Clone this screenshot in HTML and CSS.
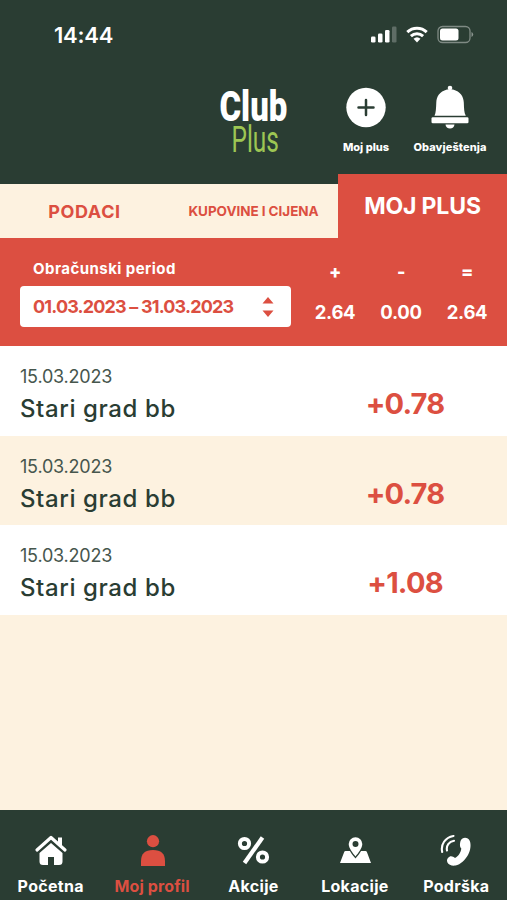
FILE: index.html
```html
<!DOCTYPE html>
<html lang="bs">
<head>
<meta charset="utf-8">
<meta name="viewport" content="width=device-width, initial-scale=1">
<title>Club Plus</title>
<link rel="stylesheet" href="styles.css">
</head>
<body>
<div class="app">
  <header class="top">
    <div class="status">
      <span class="time">14:44</span>
      <svg class="status-icons" width="104" height="20" viewBox="0 0 104 20" fill="#fff">
        <rect x="1" y="11.500" width="4.500" height="6" rx="1.300"/><rect x="8" y="8.500" width="4.500" height="9" rx="1.300"/><rect x="15" y="5" width="4.500" height="12.500" rx="1.300"/><rect x="22" y="1.500" width="4.500" height="16" rx="1.300" opacity=".25"/>
        <g fill="none" stroke="#fff" stroke-width="3"><path d="M37.300 7.200a14 14 0 0 1 19.400 0"/><path d="M40.900 11.200a9 9 0 0 1 12.200 0"/></g>
        <path d="M43.500 13.800a5.200 5.200 0 0 1 7 0L47 17.500z"/>
        <rect x="68" y="1.500" width="32" height="16" rx="4.500" fill="none" stroke="#fff" stroke-opacity=".4" stroke-width="1.300"/>
        <rect x="70" y="3.500" width="18.500" height="12" rx="2.500"/><path d="M101.500 7v5q1.700-.8 1.700-2.500t-1.700-2.500z" opacity=".45"/>
      </svg>
    </div>
    <div class="brand-row">
      <svg class="logo" width="70" height="90" viewBox="0 0 70 90">
        <text class="logo-club" transform="translate(.5 46) scale(.6 1)" x="0" y="0" textLength="113" lengthAdjust="spacingAndGlyphs">Club</text>
        <text class="logo-plus" transform="translate(12.500 77) scale(.6 1)" x="0" y="0" textLength="79" lengthAdjust="spacingAndGlyphs">Plus</text>
      </svg>
      <div class="action plus">
        <svg width="40" height="44" viewBox="0 0 40 44"><circle cx="20" cy="22.500" r="19.700" fill="#fff"/><path d="M20 15v15M12.500 22.500h15" stroke="#2a3d33" stroke-width="2.500" stroke-linecap="round"/></svg>
        <span>Moj plus</span>
      </div>
      <div class="action bell">
        <svg width="40" height="44" viewBox="0 0 40 44" fill="#fff"><circle cx="20" cy="3" r="2.300"/><path d="M17 4.500h6c7.500 2 10.500 7 10.800 13 .3 6 .2 10 2 13.300H4.500c1.500-3.300 1.500-7.300 1.800-13.300C6.500 11.500 9.500 6.500 17 4.500z"/><rect x="1.500" y="32.300" width="37" height="6" rx="1.300"/><path d="M15.500 39.500h9c-.3 2.500-2 4-4.500 4s-4.200-1.500-4.500-4z"/></svg>
        <span>Obavještenja</span>
      </div>
    </div>
  </header>
  <nav class="tabs">
    <a class="tab t1">PODACI</a>
    <a class="tab t2">KUPOVINE I CIJENA</a>
    <a class="tab t3">MOJ PLUS</a>
  </nav>
  <section class="summary">
    <div class="period">
      <label>Obračunski period</label>
      <div class="select"><span>01.03.2023 – 31.03.2023</span>
        <svg width="12" height="20" viewBox="0 0 12 20" fill="#dc4f41"><path d="M6 0l5.500 6.500H.5zM6 20l5.500-6.500H.5z"/></svg>
      </div>
    </div>
    <div class="totals">
      <div><b>+</b><span>2.64</span></div>
      <div><b>-</b><span>0.00</span></div>
      <div><b>=</b><span>2.64</span></div>
    </div>
  </section>
  <main class="list">
    <article class="row"><div class="info"><time>15.03.2023</time><h2>Stari grad bb</h2></div><strong>+0.78</strong></article>
    <article class="row"><div class="info"><time>15.03.2023</time><h2>Stari grad bb</h2></div><strong>+0.78</strong></article>
    <article class="row"><div class="info"><time>15.03.2023</time><h2>Stari grad bb</h2></div><strong>+1.08</strong></article>
  </main>
  <nav class="bottom">
    <a><svg width="34" height="32" viewBox="0 0 34 32" fill="#fff"><path d="M3 15L17 2.500l14 12.500" fill="none" stroke="#fff" stroke-width="3.200" stroke-linecap="round" stroke-linejoin="round"/><path d="M24 2.500h4v9l-4-3.500z"/><path d="M17 8L5.500 18v8.500q0 3.500 3.500 3.500h5v-8h6v8h5q3.500 0 3.500-3.500V18z"/></svg><span>Početna</span></a>
    <a class="on"><svg width="34" height="32" viewBox="0 0 34 32" fill="#dc4f41"><circle cx="18" cy="6.200" r="6.100"/><path d="M6 31V26q0-11 12-11t12 11v5z"/></svg><span>Moj profil</span></a>
    <a><svg width="34" height="32" viewBox="0 0 34 32" fill="none" stroke="#fff"><circle cx="8.500" cy="8.500" r="4.600" stroke-width="4"/><circle cx="26.500" cy="22" r="4.600" stroke-width="4"/><path d="M26.500 2.500L8.500 28" stroke-width="4.200"/></svg><span>Akcije</span></a>
    <a><svg width="34" height="32" viewBox="0 0 34 32" fill="#fff"><path d="M7.500 16h20q1 0 1.400 1L33 28H2l4.200-11q.3-1 1.300-1z"/><path d="M17.500 1a8 8 0 0 1 8 8c0 5-5 11-8 14.500-3-3.500-8-9.500-8-14.500a8 8 0 0 1 8-8z" fill="#2a3d33"/><path fill-rule="evenodd" d="M17.500 2.200a6.800 6.800 0 0 1 6.800 6.800c0 4-4 9-6.800 12.500-2.800-3.500-6.800-8.500-6.800-12.500a6.800 6.800 0 0 1 6.800-6.800zm0 3.800a3 3 0 1 0 0 6 3 3 0 0 0 0-6z"/></svg><span>Lokacije</span></a>
    <a><svg width="34" height="32" viewBox="0 0 34 32" fill="#fff"><path d="M23.500 3.500c2.500-1.500 6-.5 7.300 2.500 1.500 4 .7 9.500-1.800 14-2.800 5-7.500 9.500-12.500 10.500-3.500.6-7-.7-8.200-3.300-.9-2.200.2-4.500 2.200-5.500 2-.9 3.800.2 5.500 1.300 3.500-2 6-6 6.300-9.600-1.300-1.300-1.600-3-1.200-5.500.3-2 1-3.600 2.400-4.400z"/><path d="M3.200 17C1.500 9.500 6 2.500 14.500 1M8 15.500C7 10.500 10 6.500 15 5.700" fill="none" stroke="#fff" stroke-width="2.100" stroke-linecap="round"/></svg><span>Podrška</span></a>
  </nav>
</div>
</body>
</html>
```
FILE: styles.css
```css
* { box-sizing: border-box; }
body { margin: 0; background: #fdf2e0; font-family: Inter, "Liberation Sans", sans-serif; color: #2a3d33; }
.app { width: 507px; height: 900px; display: flex; flex-direction: column; overflow: hidden; }
.top { height: 184px; background: #2a3d33; color: #fff; }
.status { height: 70px; padding: 0 33px 0 54px; display: flex; align-items: center; justify-content: space-between; }
.time { font-size: 22px; font-weight: 600; line-height: 70px; letter-spacing: -.2px; }
.status-icons { display: block; }
.brand-row { display: flex; padding-left: 219px; }
.logo { margin-top: 5px; overflow: visible; }
.logo text { font-family: Roboto, sans-serif; }
.logo-club { font-size: 43px; font-weight: 900; fill: #fff; }
.logo-plus { font-size: 37px; font-weight: 400; fill: #9dc653; }
.action { display: flex; flex-direction: column; align-items: center; padding-top: 15px; font-size: 11px; font-weight: 800; line-height: 16px; white-space: nowrap; }
.action span { margin-top: 10px; }
.plus { width: 60px; margin-left: 47px; }
.bell { width: 84px; margin-left: 12px; letter-spacing: .1px; }
.tabs { height: 54px; display: flex; align-items: flex-end; font-weight: 700; background: #fdf2e0; color: #dc4f41; }
.tab { display: flex; align-items: center; justify-content: center; height: 54px; white-space: nowrap; }
.t1 { width: 169px; font-size: 18px; letter-spacing: .6px; }
.t2 { width: 169px; font-size: 13.5px; letter-spacing: -.05px; }
.t3 { width: 169px; height: 64px; background: #dc4f41; color: #fff; font-size: 23px; letter-spacing: -.15px; }
.summary { height: 108px; background: #dc4f41; color: #fff; display: flex; font-weight: 700; }
.period { width: 271px; margin-left: 20px; padding-top: 21px; }
.period label { display: block; height: 20px; line-height: 20px; padding-left: 13px; font-size: 15px; letter-spacing: .45px; }
.select { height: 41px; margin-top: 7px; padding: 0 17px 0 13px; border-radius: 4px; background: #fff; color: #dc4f41; display: flex; align-items: center; justify-content: space-between; font-size: 18px; letter-spacing: -.83px; white-space: nowrap; }
.totals { width: 198px; margin-left: 11px; padding-top: 22px; display: grid; grid-template-columns: repeat(3, 1fr); text-align: center; font-size: 18.5px; letter-spacing: -.3px; }
.totals b { display: block; line-height: 24px; margin-bottom: 16px; font-weight: 800; font-size: 18px; }
.totals span { line-height: 24px; }
.list { flex: 1; }
.row { height: 89.5px; display: flex; padding: 17px 0 0 20px; background: #fff; }
.row:nth-child(even) { background: #fdf2e0; }
.info { width: 285px; }
.row time { display: block; font-size: 18px; line-height: 27px; letter-spacing: -.2px; color: #46564d; }
.row h2 { margin: 0; font-size: 24px; font-weight: 500; line-height: 37px; letter-spacing: .6px; }
.row strong { width: 200px; text-align: center; font-size: 29px; line-height: 81px; letter-spacing: -.8px; color: #dc4f41; }
.bottom { height: 90px; background: #2a3d33; color: #fff; display: grid; grid-template-columns: repeat(5, 1fr); }
.bottom a { display: flex; flex-direction: column; align-items: center; padding-top: 25px; font-size: 16px; font-weight: 700; line-height: 20px; letter-spacing: .3px; }
.bottom span { margin-top: 9px; }
.bottom .on { color: #dc4f41; letter-spacing: .1px; }
```
